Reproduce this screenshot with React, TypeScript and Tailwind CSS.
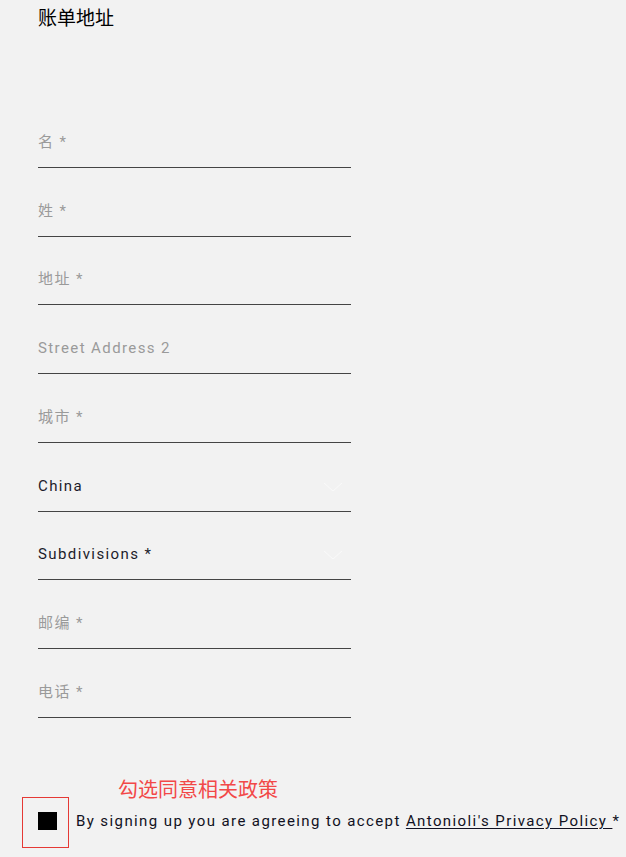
const fields = [
  { label: "名 *", filled: false },
  { label: "姓 *", filled: false },
  { label: "地址 *", filled: false },
  { label: "Street Address 2", filled: false },
  { label: "城市 *", filled: false },
  { label: "China", filled: true, select: true },
  { label: "Subdivisions *", filled: true, select: true },
  { label: "邮编 *", filled: false },
  { label: "电话 *", filled: false },
];

function Chevron() {
  return (
    <svg width="20" height="10" viewBox="0 0 20 10" className="ml-auto mr-[8px] mb-[4px]">
      <path d="M1 1 L10 9 L19 1" fill="none" stroke="#ffffff" strokeWidth="1" opacity="0.6" />
    </svg>
  );
}

export default function App() {
  return (
    <div
      className="min-h-screen w-full bg-[#f2f2f2] pl-[38px] overflow-hidden"
      style={{ fontFamily: 'Roboto, "Noto Sans CJK SC", sans-serif' }}
    >
      {/* Heading */}
      <div className="pt-[7px] text-[19px] leading-[24px] text-black">账单地址</div>

      {/* Fields */}
      <div className="mt-[68px] flex flex-col">
        {fields.map((f) => (
          <div
            key={f.label}
            className="h-[68.75px] w-[313px] border-b border-[#444444] flex items-end pb-[15px]"
          >
            <span
              className={
                "text-[15px] leading-[20px] tracking-[1.4px] " +
                (f.filled ? "text-[#1c1c2b]" : "text-[#9a9a9a]")
              }
            >
              {f.label}
            </span>
            {f.select && <Chevron />}
          </div>
        ))}
      </div>

      {/* Annotation */}
      <div className="mt-[60px] pl-[80px] text-[20px] leading-[24px] text-[#f24848]">
        勾选同意相关政策
      </div>

      {/* Consent row */}
      <div className="mt-[9px] flex items-center h-[20px] whitespace-nowrap">
        <div className="relative h-[18px] w-[19px] bg-black shrink-0">
          <div className="absolute left-[-16px] top-[-15px] h-[51px] w-[47px] border border-[#e53935]" />
        </div>
        <span className="ml-[19px] text-[15px] leading-[20px] tracking-[1.4px] text-[#111122]">
          By signing up you are agreeing to accept{" "}
          <span className="underline underline-offset-[2px]">Antonioli's Privacy Policy </span> *
        </span>
      </div>
    </div>
  );
}
